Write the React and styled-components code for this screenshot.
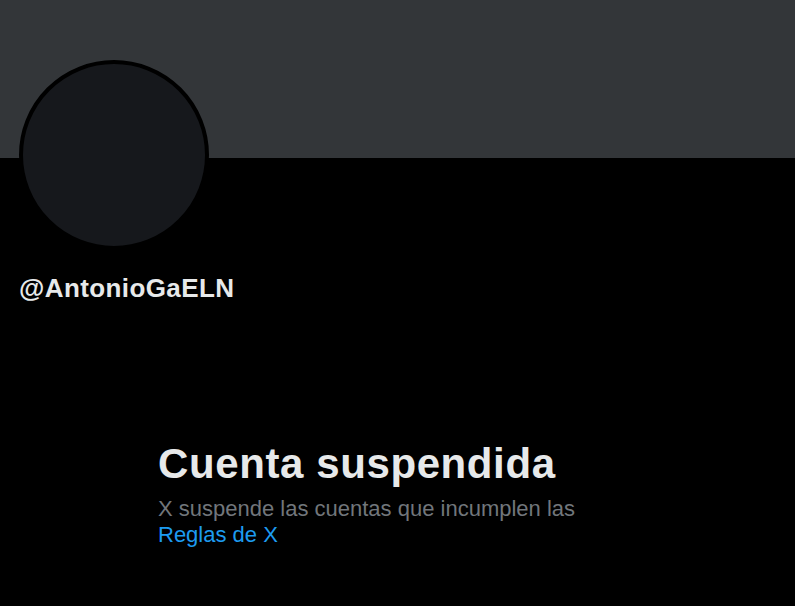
import styled, { createGlobalStyle } from 'styled-components';

const GlobalStyle = createGlobalStyle`
  html, body {
    margin: 0;
    padding: 0;
    background: #000;
  }
  body {
    font-family: "Liberation Sans", Arial, sans-serif;
    color: #e7e9ea;
  }
`;

const Page = styled.div`
  width: 795px;
  height: 606px;
  background: #000;
  overflow: hidden;
`;

const Banner = styled.div`
  height: 158px;
  background: #333639;
`;

const ProfileHead = styled.div`
  padding: 0 19px;
  margin-top: -98px;
`;

const Avatar = styled.div`
  width: 182px;
  height: 182px;
  border-radius: 50%;
  background: #16181c;
  border: 4px solid #000;
`;

const Handle = styled.div`
  margin-top: 22px;
  font-size: 26px;
  font-weight: 700;
  line-height: 32px;
  letter-spacing: 0.4px;
`;

const Notice = styled.div`
  padding-left: 158px;
  margin-top: 135px;
  display: flex;
  flex-direction: column;
  width: 460px;
`;

const Title = styled.h1`
  margin: 0 0 7px;
  font-size: 42px;
  font-weight: 700;
  line-height: 50px;
  letter-spacing: 0.6px;
`;

const Body = styled.p`
  margin: 0;
  font-size: 22px;
  line-height: 26px;
  color: #71767b;
`;

const RulesLink = styled.a`
  color: #1d9bf0;
  text-decoration: none;
`;

const App = () => {
  return (
    <Page>
      <GlobalStyle />
      <Banner />
      <ProfileHead>
        <Avatar />
        <Handle>@AntonioGaELN</Handle>
      </ProfileHead>
      <Notice>
        <Title>Cuenta suspendida</Title>
        <Body>
          X suspende las cuentas que incumplen las{' '}
          <RulesLink href="#">Reglas de X</RulesLink>
        </Body>
      </Notice>
    </Page>
  );
};

export default App;
